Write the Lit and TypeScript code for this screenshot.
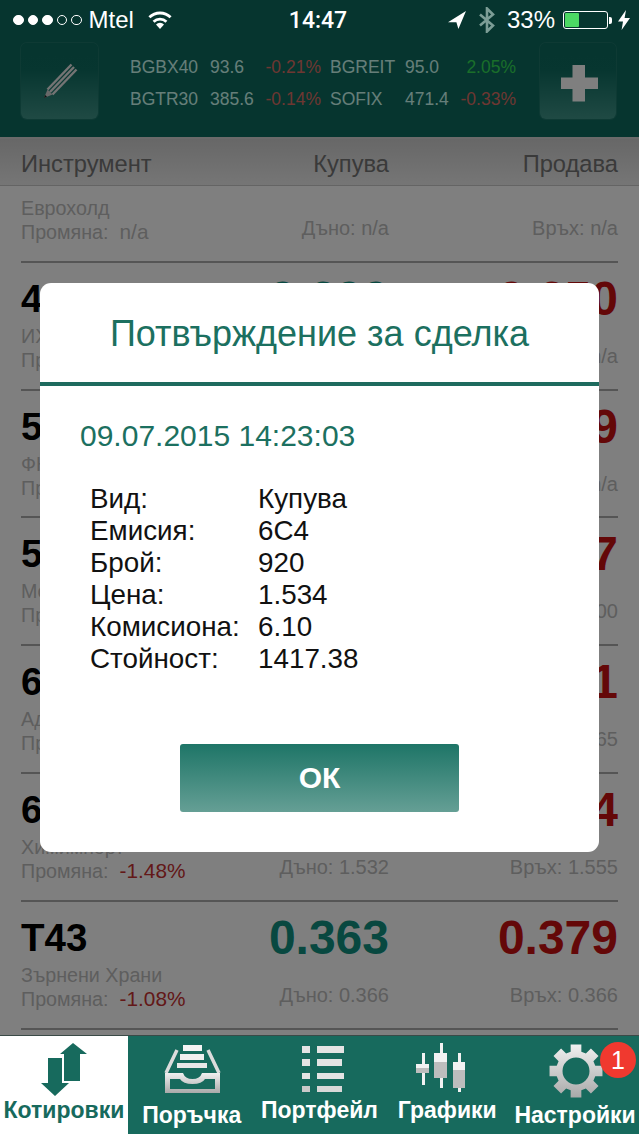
import { LitElement, html, css, svg } from "lit";
import { customElement } from "lit/decorators.js";

interface Row {
  sym: string;
  name: string;
  change: string;
  buy: string;
  sell: string;
  low: string;
  high: string;
}

const rows: Row[] = [
  { sym: "4ID", name: "ИХБ", change: "n/a", buy: "0.600", sell: "0.650", low: "n/a", high: "n/a" },
  { sym: "5F4", name: "ФНИ", change: "n/a", buy: "0.710", sell: "0.799", low: "n/a", high: "n/a" },
  { sym: "5MB", name: "Монбат", change: "n/a", buy: "8.080", sell: "8.147", low: "8.100", high: "8.100" },
  { sym: "6A6", name: "Адванс", change: "n/a", buy: "1.520", sell: "1.561", low: "1.540", high: "1.565" },
  { sym: "6C4", name: "Химимпорт", change: "-1.48%", buy: "1.534", sell: "1.544", low: "1.532", high: "1.555" },
  { sym: "T43", name: "Зърнени Храни", change: "-1.08%", buy: "0.363", sell: "0.379", low: "0.366", high: "0.366" },
];

const details: [string, string][] = [
  ["Вид:", "Купува"],
  ["Емисия:", "6C4"],
  ["Брой:", "920"],
  ["Цена:", "1.534"],
  ["Комисиона:", "6.10"],
  ["Стойност:", "1417.38"],
];

function gearPath(cx: number, cy: number, ro: number, rb: number, rh: number): string {
  const pts: string[] = [];
  const n = 8;
  for (let i = 0; i < n; i++) {
    const a = (i * 2 * Math.PI) / n - Math.PI / 2;
    const w1 = 0.27;
    const w2 = 0.2;
    const seq: [number, number][] = [
      [rb, a - w1],
      [ro, a - w2],
      [ro, a + w2],
      [rb, a + w1],
    ];
    for (const [r, t] of seq) {
      pts.push(`${(cx + r * Math.cos(t)).toFixed(2)} ${(cy + r * Math.sin(t)).toFixed(2)}`);
    }
  }
  const hole = `M${cx - rh} ${cy}a${rh} ${rh} 0 1 0 ${rh * 2} 0a${rh} ${rh} 0 1 0 ${-rh * 2} 0Z`;
  return `M${pts.join("L")}Z${hole}`;
}

const iconDefs = svg`
  <defs>
    <linearGradient id="g1" x1="0" y1="0" x2="0" y2="1">
      <stop offset="0" stop-color="#f0f0f0"/><stop offset="1" stop-color="#a9a9a9"/>
    </linearGradient>
  </defs>`;

@customElement("app-root")
export class AppRoot extends LitElement {
  static styles = css`
    :host {
      display: block;
      width: 639px;
      height: 1134px;
      overflow: hidden;
      font-family: "Liberation Sans", Arial, sans-serif;
    }
    .page { display: flex; flex-direction: column; height: 1134px; background: #fff; }

    .status {
      height: 40px; flex: none; background: #06352f; color: #fff;
      display: grid; grid-template-columns: 1fr auto 1fr; align-items: center;
      padding: 0 9px 0 13px;
    }
    .status-left, .status-right { display: flex; align-items: center; }
    .status-right { justify-content: flex-end; }
    .dots { display: flex; gap: 4px; margin-right: 7px; }
    .dot { border-radius: 50%; border: 1px solid #fff; background: #fff; box-sizing: content-box; width: 8.5px; height: 8.5px; }
    .dot.off { background: transparent; }
    .carrier { font-size: 24px; }
    .wifi { margin-left: 13px; }
    .time { font-family: Roboto, sans-serif; font-weight: 500; font-size: 23px; margin-right: 7px; }
    .pct { font-size: 24px; margin: 0 8px 0 11px; }
    .bt { margin-left: 12px; }
    .batt { width: 45px; height: 18px; box-sizing: border-box; border: 1px solid #fff; border-radius: 3px; padding: 1px; }
    .batt i { display: block; width: 14px; height: 100%; background: #4cd964; border-radius: 1px; }
    .nub { width: 3px; height: 7px; background: #fff; border-radius: 0 2px 2px 0; margin: 0 6px 0 1px; }

    .main { flex: 1; position: relative; overflow: hidden; background: #fff; }
    .topbar {
      height: 99px; box-sizing: border-box; background: #0c6a5e; border-bottom: 2px solid #d4d4d4;
      display: flex; align-items: flex-start; padding: 3px 23px 0 21px;
    }
    .tbtn {
      width: 77px; height: 76px; flex: none; border-radius: 6px; box-sizing: border-box;
      background: linear-gradient(#0c6a5e 0%, #0e6c60 35%, #3f9488 100%);
      box-shadow: 0 0 0 1px rgba(255, 255, 255, 0.07);
      display: flex; align-items: center; justify-content: center;
    }
    .tbtn.plus { width: 76px; }
    .ticker {
      flex: 1; margin: 8px 0 0 32px;
      display: grid; grid-template-columns: 80px 55px 56px 9px 75px 55px 56px;
      grid-auto-rows: 32px; align-items: center;
      font-size: 17.5px; color: #ccfcf2; white-space: nowrap;
    }
    .ticker .r { text-align: right; }
    .red { color: #dc6e64; }
    .green { color: #34dc54; }

    .colhead {
      height: 47px; box-sizing: border-box; padding: 5px 21px 0;
      display: grid; grid-template-columns: 220px 148px 229px; align-items: center;
      background: linear-gradient(#cfcfcf, #ececec);
      border-bottom: 1px solid #c8c8c8;
      font-size: 23.7px; color: #747474;
    }
    .colhead span:not(:first-child) { text-align: right; }

    .list { background: #fff; }
    .row {
      margin: 0 21px; height: 127.83px; box-sizing: border-box;
      border-bottom: 2px solid #aaa; padding-top: 10px;
      display: grid; grid-template-columns: 220px 148px 229px; grid-template-rows: 52px 46px;
    }
    .row.first { height: 76.8px; padding-top: 11px; grid-template-rows: 0 46px; }
    .sym { font-size: 38.5px; font-weight: bold; line-height: 52px; color: #000; }
    .val { font-size: 48px; font-weight: bold; line-height: 52px; text-align: right; }
    .buy { color: #109080; }
    .sell { color: #c81010; }
    .sub { font-size: 19.7px; line-height: 23px; color: #bcbcbc; white-space: nowrap; }
    .sub b { font-weight: normal; font-size: 20.8px; margin-left: 11px; }
    .sub b.neg { color: #c63030; }
    .lim {
      grid-row: 2; align-self: end; text-align: right; margin-bottom: 3px;
      font-size: 20px; line-height: 24px; color: #bcbcbc; white-space: nowrap;
    }
    .info { grid-row: 2; grid-column: 1; }

    .overlay { position: absolute; inset: 0; background: rgba(0, 0, 0, 0.5); }
    .modal {
      margin: 242.5px 40px 0; height: 569.5px; background: #fff; border-radius: 11px;
      display: flex; flex-direction: column;
    }
    .mtitle {
      height: 103.5px; flex: none; box-sizing: border-box; border-bottom: 4px solid #1e6b5e;
      display: flex; align-items: center; justify-content: center;
      font-size: 36px; color: #1c7060; padding-top: 3px;
    }
    .mdate { font-size: 30px; line-height: 40px; color: #1c7060; margin: 30px 0 0 40px; }
    .mtable {
      margin: 27px 0 0 50px;
      display: grid; grid-template-columns: 168px 1fr; grid-auto-rows: 32px; align-items: center;
      font-size: 27.8px; color: #111;
    }
    .okwrap { margin-top: 69px; display: flex; justify-content: center; }
    .ok {
      width: 279px; height: 68px; border-radius: 3px;
      background: linear-gradient(#1e7567, #659f95);
      color: #fff; font-size: 30px; font-weight: bold;
      display: flex; align-items: center; justify-content: center;
    }

    .tabs {
      height: 99px; flex: none; background: #176a5d; border-top: 1px solid #3a4a47; box-sizing: border-box;
      display: grid; grid-template-columns: repeat(5, 1fr);
    }
    .tab { position: relative; display: flex; flex-direction: column; align-items: center; color: #fff; min-width: 0; }
    .tab.active { background: #fff; color: #176a5d; }
    .tab svg { display: block; flex: none; margin: 2px 0 -5px; }
    .tab span { font-size: 23px; font-weight: bold; white-space: nowrap; line-height: 26px; }
    .tab span.low { margin-top: 5px; }
    .badge {
      position: absolute; right: 3px; top: 6px; width: 36px; height: 36px; border-radius: 50%;
      background: #f0392f; color: #fff; font-size: 25px;
      display: flex; align-items: center; justify-content: center;
    }
  `;

  private statusBar() {
    return html`<div class="status">
      <div class="status-left">
        <div class="dots">
          <i class="dot"></i><i class="dot"></i><i class="dot"></i><i class="dot off"></i><i class="dot off"></i>
        </div>
        <span class="carrier">Mtel</span>
        <svg class="wifi" width="26" height="18" viewBox="0 0 26 18">
          <path d="M13 18l-4-4.600a5.600 5.600 0 0 1 8 0Z" fill="#fff"/>
          <path d="M6.600 10.800a9.200 9.200 0 0 1 12.800 0" fill="none" stroke="#fff" stroke-width="2.800"/>
          <path d="M2.400 6.300a15.200 15.200 0 0 1 21.200 0" fill="none" stroke="#fff" stroke-width="2.800"/>
        </svg>
      </div>
      <div class="time">14:47</div>
      <div class="status-right">
        <svg width="18" height="18" viewBox="0 0 18 18"><path d="M18 0L0 11.200h8.400L10.400 18Z" fill="#fff"/></svg>
        <svg class="bt" width="18" height="26" viewBox="0 0 18 26">
          <path d="M2 7.500L15 18.500L9 24.500V1.500L15 7.500L2 18.500" fill="none" stroke="#7c9d96" stroke-width="2.600"/>
        </svg>
        <span class="pct">33%</span>
        <div class="batt"><i></i></div>
        <div class="nub"></div>
        <svg width="12" height="20" viewBox="0 0 12 20"><path d="M8 0L0 11.500h5L3.600 20L12 8H6.600Z" fill="#fff"/></svg>
      </div>
    </div>`;
  }

  private topBar() {
    return html`<div class="topbar">
      <div class="tbtn">
        <svg width="77" height="76" viewBox="0 0 77 76">
          <path d="M23 55L26.500 46.500L31.500 51.500Z" fill="#d0d0d0"/>
          <path d="M23 55L24.200 52L26 53.800Z" fill="#222"/>
          <path d="M26.500 46.500L50.500 21.500" stroke="#e8e8e8" stroke-width="2.400" fill="none"/>
          <path d="M29 49L53 24" stroke="#e8e8e8" stroke-width="2.400" fill="none"/>
          <path d="M31.500 51.500L55.500 26.500" stroke="#e8e8e8" stroke-width="2.400" fill="none"/>
        </svg>
      </div>
      <div class="ticker">
        <span>BGBX40</span><span>93.6</span><span class="r red">-0.21%</span><span></span>
        <span>BGREIT</span><span>95.0</span><span class="r green">2.05%</span>
        <span>BGTR30</span><span>385.6</span><span class="r red">-0.14%</span><span></span>
        <span>SOFIX</span><span>471.4</span><span class="r red">-0.33%</span>
      </div>
      <div class="tbtn plus">
        <svg width="76" height="76" viewBox="0 0 76 76">
          <path d="M32.500 22H45V34.500H58V46H45V58.500H32.500V46H21V34.500H32.500Z" fill="#fff"/>
        </svg>
      </div>
    </div>`;
  }

  private listRow(r: Row) {
    return html`<div class="row">
      <div class="sym">${r.sym}</div>
      <div class="val buy">${r.buy}</div>
      <div class="val sell">${r.sell}</div>
      <div class="info">
        <div class="sub">${r.name}</div>
        <div class="sub">Промяна:<b class=${r.change.startsWith("-") ? "neg" : ""}>${r.change}</b></div>
      </div>
      <div class="lim">Дъно: ${r.low}</div>
      <div class="lim">Връх: ${r.high}</div>
    </div>`;
  }

  private modal() {
    return html`<div class="overlay">
      <div class="modal">
        <div class="mtitle">Потвърждение за сделка</div>
        <div class="mdate">09.07.2015 14:23:03</div>
        <div class="mtable">
          ${details.map(([k, v]) => html`<span>${k}</span><span>${v}</span>`)}
        </div>
        <div class="okwrap"><div class="ok">ОК</div></div>
      </div>
    </div>`;
  }

  private tabs() {
    return html`<div class="tabs">
      <div class="tab active">
        <svg width="127" height="64" viewBox="0 0 127 64">
          <path d="M73 5L87 16H80V43H64V16H60Z" fill="#176a5d"/>
          <path d="M48 20H62V45H69L55 58L41 45H48Z" fill="#176a5d"/>
        </svg>
        <span>Котировки</span>
      </div>
      <div class="tab">
        <svg width="127" height="64" viewBox="0 0 127 64">
          ${iconDefs}
          <rect x="55" y="7" width="19" height="6" fill="#f4f4f4"/>
          <rect x="52" y="16" width="24" height="6" fill="#f0f0f0"/>
          <rect x="49" y="25" width="30" height="5" fill="#e8e8e8"/>
          <path d="M49 12L38 35M80 12L91 35" stroke="#dcdcdc" stroke-width="3.500" fill="none"/>
          <path fill="url(#g1)" fill-rule="evenodd" d="M37 35H55Q57 41 64.500 41Q72 41 74 35H92V55H37ZM42 41H52Q55 46 64.500 46Q74 46 77 41H87V51H42Z"/>
        </svg>
        <span class="low">Поръчка</span>
      </div>
      <div class="tab">
        <svg width="127" height="64" viewBox="0 0 127 64">
          <g fill="#e4e4e4">
            <rect x="46" y="8" width="8" height="7"/><rect x="61" y="8" width="27" height="7"/>
            <rect x="46" y="21" width="8" height="7"/><rect x="61" y="21" width="25" height="7"/>
            <rect x="46" y="35" width="8" height="6"/><rect x="61" y="35" width="27" height="6"/>
            <rect x="46" y="48" width="8" height="6" fill="#c9c9c9"/><rect x="61" y="48" width="25" height="6" fill="#d8d8d8"/>
          </g>
        </svg>
        <span>Портфейл</span>
      </div>
      <div class="tab">
        <svg width="127" height="64" viewBox="0 0 127 64">
          <g fill="#f2f2f2">
            <rect x="38" y="15" width="3" height="32"/><rect x="56" y="5" width="3" height="45"/><rect x="74" y="15" width="3" height="39"/>
            <rect x="32" y="26" width="13" height="9"/><rect x="50" y="15" width="13" height="25"/><rect x="69" y="24" width="12" height="26"/>
          </g>
          <g fill="#bdbdbd">
            <rect x="32" y="30" width="13" height="5"/><rect x="50" y="24" width="13" height="16"/><rect x="69" y="32" width="12" height="18"/>
          </g>
        </svg>
        <span>Графики</span>
      </div>
      <div class="tab">
        <svg width="127" height="64" viewBox="0 0 127 64">
          ${iconDefs}
          <path fill="url(#g1)" fill-rule="evenodd" d=${gearPath(64, 33, 27, 20, 13.5)}/>
        </svg>
        <span class="low">Настройки</span>
        <div class="badge">1</div>
      </div>
    </div>`;
  }

  render() {
    return html`<div class="page">
      ${this.statusBar()}
      <div class="main">
        ${this.topBar()}
        <div class="colhead"><span>Инструмент</span><span>Купува</span><span>Продава</span></div>
        <div class="list">
          <div class="row first">
            <div class="info">
              <div class="sub">Еврохолд</div>
              <div class="sub">Промяна:<b>n/a</b></div>
            </div>
            <div class="lim">Дъно: n/a</div>
            <div class="lim">Връх: n/a</div>
          </div>
          ${rows.map((r) => this.listRow(r))}
        </div>
        ${this.modal()}
      </div>
      ${this.tabs()}
    </div>`;
  }
}
